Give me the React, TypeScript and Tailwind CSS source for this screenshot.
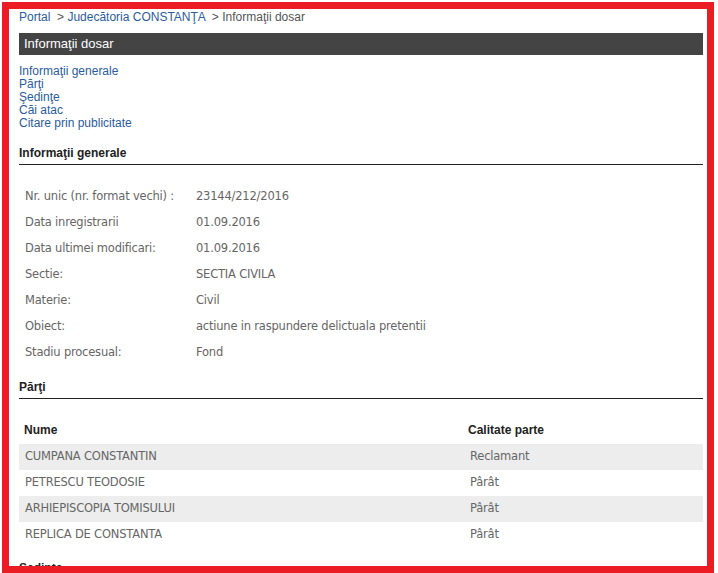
const info: [string, string][] = [
  ['Nr. unic (nr. format vechi) :', '23144/212/2016'],
  ['Data inregistrarii', '01.09.2016'],
  ['Data ultimei modificari:', '01.09.2016'],
  ['Sectie:', 'SECTIA CIVILA'],
  ['Materie:', 'Civil'],
  ['Obiect:', 'actiune in raspundere delictuala pretentii'],
  ['Stadiu procesual:', 'Fond'],
];

const parti: [string, string][] = [
  ['CUMPANA CONSTANTIN', 'Reclamant'],
  ['PETRESCU TEODOSIE', 'Pârât'],
  ['ARHIEPISCOPIA TOMISULUI', 'Pârât'],
  ['REPLICA DE CONSTANTA', 'Pârât'],
];

const links = ['Informaţii generale', 'Părţi', 'Şedinţe', 'Căi atac', 'Citare prin publicitate'];

const arial = { fontFamily: '"Liberation Sans", Arial, sans-serif' };
const tahoma = { fontFamily: '"DejaVu Sans", Tahoma, sans-serif' };

function SectionTitle({ children }: { children: React.ReactNode }) {
  return (
    <div
      className="border-b border-[#222] text-[12px] font-bold text-[#222] leading-[15px] pb-[3px]"
      style={arial}
    >
      {children}
    </div>
  );
}

export default function App() {
  return (
    <div className="relative w-[718px] h-[573px] overflow-hidden bg-white">
      <div className="pl-[19px] pr-[15px] pt-[10px]">
        {/* Breadcrumb */}
        <div className="text-[12px] leading-[14px] text-[#555] whitespace-pre" style={arial}>
          <span className="text-[#2b5c9e]">Portal</span>
          <span>{'  > '}</span>
          <span className="text-[#2b5c9e]">Judecătoria CONSTANŢA</span>
          <span>{'  > Informaţii dosar'}</span>
        </div>

        {/* Title bar */}
        <div
          className="mt-[9px] h-[22px] bg-[#444] text-white text-[13px] leading-[22px] px-[5px]"
          style={arial}
        >
          Informaţii dosar
        </div>

        {/* Anchors */}
        <div className="mt-[10px] flex flex-col text-[12px] leading-[13px] text-[#2b5c9e]" style={arial}>
          {links.map((l) => (
            <span key={l}>{l}</span>
          ))}
        </div>

        <div className="mt-[16px]">
          <SectionTitle>Informaţii generale</SectionTitle>
        </div>

        {/* General info */}
        <div className="mt-[19px] text-[11.5px] text-[#666]" style={tahoma}>
          {info.map(([k, v]) => (
            <div key={k} className="flex h-[26px] items-center">
              <div className="w-[177px] pl-[6px] tracking-[-0.2px]">{k}</div>
              <div className="tracking-[-0.2px]">{v}</div>
            </div>
          ))}
        </div>

        <div className="mt-[14px]">
          <SectionTitle>Părţi</SectionTitle>
        </div>

        {/* Parties table */}
        <div className="mt-[19px]">
          <div className="flex h-[26px] items-center pb-[3px] text-[12px] font-bold text-[#222]" style={arial}>
            <div className="w-[449px] pl-[5px]">Nume</div>
            <div>Calitate parte</div>
          </div>
          {parti.map(([n, c], i) => (
            <div
              key={n}
              className={`flex h-[26px] items-center text-[11.5px] text-[#666] ${i % 2 === 0 ? 'bg-[#ededed]' : ''}`}
              style={tahoma}
            >
              <div className="w-[451px] pl-[6px] tracking-[-0.2px]">{n}</div>
              <div className="tracking-[-0.2px]">{c}</div>
            </div>
          ))}
        </div>

        <div className="mt-[13px]">
          <SectionTitle>Şedinţe</SectionTitle>
        </div>
      </div>

      {/* Red frame overlay */}
      <div className="pointer-events-none absolute left-[2px] top-[2px] w-[712px] h-[571px] border-[7px] border-[#ec1c24]" />
    </div>
  );
}
